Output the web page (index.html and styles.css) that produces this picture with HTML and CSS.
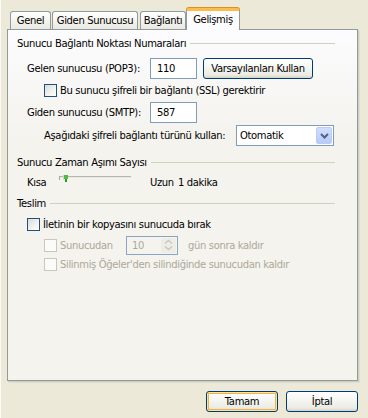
FILE: index.html
```html
<!DOCTYPE html>
<html lang="tr">
<head>
  <meta charset="UTF-8" />
  <title>Gelişmiş</title>
  <link rel="stylesheet" href="styles.css">
</head>
<body>
  <div class="dialog">
    <div class="tabs">
      <div class="tab t-genel">Genel</div>
      <div class="tab t-giden">Giden Sunucusu</div>
      <div class="tab t-baglanti">Bağlantı</div>
      <div class="tab active t-gelismis">Gelişmiş</div>
    </div>

    <div class="panel">
      <div class="group-title"><span>Sunucu Bağlantı Noktası Numaraları</span></div>

      <div class="row r-pop">
        <span class="lbl">Gelen sunucusu (POP3):</span>
        <span class="field">110</span>
        <span class="btn btn-defaults">Varsayılanları Kullan</span>
      </div>

      <div class="row r-check r-ssl">
        <span class="chk"></span>
        <span>Bu sunucu şifreli bir bağlantı (SSL) gerektirir</span>
      </div>

      <div class="row r-smtp">
        <span class="lbl">Giden sunucusu (SMTP):</span>
        <span class="field">587</span>
      </div>

      <div class="row r-enc">
        <span class="lbl-wide">Aşağıdaki şifreli bağlantı türünü kullan:</span>
        <span class="select">Otomatik
          <span class="arrow">
            <svg width="9" height="6" viewBox="0 0 9 6"><path d="M1 1 L4.5 4.5 L8 1" fill="none" stroke="#4d6185" stroke-width="2"/></svg>
          </span>
        </span>
      </div>

      <div class="group-title g-timeout"><span>Sunucu Zaman Aşımı Sayısı</span></div>

      <div class="row r-slider">
        <span class="kisa">Kısa</span>
        <span class="track">
          <svg width="72" height="16" viewBox="0 0 72 16">
            <rect x="0" y="2" width="72" height="1" fill="#b7b6ab"/>
            <rect x="0" y="3" width="72" height="1" fill="#e9e8e1"/>
            <rect x="0" y="2" width="1" height="4" fill="#a6a59b"/>
            <rect x="5" y="1" width="4" height="4" fill="#4cbc47"/>
            <rect x="6" y="5" width="2" height="3" fill="#1f9f1f"/>
            <rect x="4" y="1" width="1" height="5" fill="#d6d5cc"/>
          </svg>
        </span>
        <span class="uzun">Uzun</span>
        <span class="dakika">1 dakika</span>
      </div>

      <div class="group-title g-teslim"><span>Teslim</span></div>

      <div class="row r-check r-keep">
        <span class="chk"></span>
        <span>İletinin bir kopyasını sunucuda bırak</span>
      </div>

      <div class="row r-days disabled">
        <span class="chk off"></span>
        <span class="lbl-days">Sunucudan</span>
        <span class="spin">10
          <span class="spin-btn">
            <svg width="9" height="12" viewBox="0 0 9 12"><path d="M1 4.5 L4.5 1.5 L8 4.5 M1 7.5 L4.5 10.5 L8 7.5" fill="none" stroke="#c9c8be" stroke-width="1.5"/></svg>
          </span>
        </span>
        <span class="after-spin">gün sonra kaldır</span>
      </div>

      <div class="row r-check r-deleted disabled">
        <span class="chk off"></span>
        <span>Silinmiş Öğeler'den silindiğinde sunucudan kaldır</span>
      </div>
    </div>

    <div class="footer">
      <span class="btn btn-ok">Tamam</span>
      <span class="btn btn-cancel">İptal</span>
    </div>
  </div>
</body>
</html>
```

FILE: styles.css
```css
body {
  margin: 0;
  background-color: #ece9d8;
  font-family: "DejaVu Sans", Tahoma, sans-serif;
  font-size: 10px;
  letter-spacing: -0.35px;
  color: #000;
}
.dialog {
  width: 368px;
  height: 418px;
  box-sizing: border-box;
  padding: 8px 0 0 6px;
  border-left: 1px solid #fbfaf5;
}
.tabs {
  display: flex;
  align-items: flex-end;
  height: 21px;
  padding-left: 3px;
  position: relative;
  z-index: 1;
}
.tab {
  box-sizing: border-box;
  height: 18px;
  line-height: 17px;
  text-align: center;
  border: 1px solid #919b9c;
  border-bottom: none;
  border-radius: 3px 3px 0 0;
  background: linear-gradient(#ffffff, #f3f2ec 60%, #e9e8e1);
}
.t-genel { width: 41px; margin-right: 1px; }
.t-giden { width: 86px; margin-right: 2px; }
.t-baglanti { width: 46px; }
.t-gelismis { width: 54px; }
.tab.active {
  height: 22px;
  margin-bottom: -1px;
  line-height: 18px;
  border-top: 3px solid #f8c048;
  box-shadow: 0 -1px 0 #e68b2c;
  background: #fcfcfe;
}
.panel {
  box-sizing: border-box;
  width: 351px;
  height: 352px;
  border: 1px solid #919b9c;
  background: linear-gradient(#fcfcfe, #f4f3ee 30%);
  box-shadow: 1px 1px 0 #d0cec2, 2px 2px 0 #e0ded3;
  padding: 7px 22px 0 9px;
}
.group-title {
  display: flex;
  align-items: center;
  height: 13px;
  line-height: 13px;
}
.group-title::after {
  content: "";
  flex: 1;
  height: 1px;
  margin-left: 4px;
  background-color: #d0d0bf;
}
.g-timeout { margin-top: 10px; }
.g-teslim { margin-top: 7px; }
.row {
  display: flex;
  align-items: center;
  white-space: nowrap;
}
.row > * { flex: none; }
.r-pop { margin-top: 8px; height: 21px; padding-left: 10px; }
.r-smtp { margin-top: 5px; height: 21px; padding-left: 10px; }
.r-enc { margin-top: 2px; height: 21px; padding-left: 27px; }
.r-check { height: 13px; }
.r-ssl { margin-top: 5px; padding-left: 27px; }
.r-keep { margin-top: 8px; padding-left: 10px; }
.r-days { margin-top: 4px; height: 20px; padding-left: 27px; }
.r-deleted { margin-top: 3px; padding-left: 27px; }
.lbl { width: 123px; }
.lbl-wide { width: 192px; }
.lbl-days { width: 66px; }
.field {
  box-sizing: border-box;
  width: 47px;
  height: 21px;
  line-height: 19px;
  padding-left: 6px;
  border: 1px solid #7f9db9;
  background-color: #fff;
}
.btn {
  box-sizing: border-box;
  height: 21px;
  line-height: 19px;
  text-align: center;
  border: 1px solid #003c74;
  border-radius: 3px;
  background: linear-gradient(#ffffff, #f5f5f1 45%, #ebeae3 85%, #d6d3c6);
}
.btn-defaults { width: 110px; margin-left: 6px; }
.chk {
  box-sizing: border-box;
  width: 13px;
  height: 13px;
  margin-right: 3px;
  border: 1px solid #1c5180;
  background: linear-gradient(135deg, #dcdcd6, #f6f6f3 70%, #ffffff);
}
.chk.off {
  border-color: #cac8bb;
  background: #fbfbf9;
}
.disabled { color: #aca899; }
.select {
  position: relative;
  box-sizing: border-box;
  width: 98px;
  height: 21px;
  line-height: 19px;
  padding-left: 3px;
  border: 1px solid #7f9db9;
  background-color: #fff;
}
.arrow {
  position: absolute;
  top: 1px;
  right: 1px;
  box-sizing: border-box;
  width: 16px;
  height: 17px;
  border: 1px solid #b9cbf7;
  border-radius: 2px;
  background: linear-gradient(#d2defc, #b7caf8);
  display: flex;
  align-items: center;
  justify-content: center;
}
.r-slider { margin-top: 5px; height: 16px; padding-left: 10px; }
.kisa { width: 32px; }
.track { width: 72px; height: 16px; align-self: flex-start; }
.track svg { display: block; }
.uzun { margin-left: 19px; width: 28px; }
.spin {
  position: relative;
  box-sizing: border-box;
  width: 52px;
  height: 19px;
  line-height: 17px;
  padding-left: 5px;
  border: 1px solid #8aa4c1;
  background-color: #f4f3ee;
}
.spin-btn {
  position: absolute;
  top: 1px;
  right: 1px;
  width: 15px;
  height: 15px;
  border-radius: 2px;
  background-color: #edece5;
  display: flex;
  align-items: center;
  justify-content: center;
}
.after-spin { margin-left: 10px; }
.footer {
  display: flex;
  justify-content: flex-end;
  gap: 8px;
  margin-top: 10px;
  padding-right: 10px;
}
.btn-ok, .btn-cancel { width: 72px; }
.btn-ok {
  box-shadow: inset 0 0 0 1px #fde3a0, inset 0 0 0 2px #f2b347;
}
```
